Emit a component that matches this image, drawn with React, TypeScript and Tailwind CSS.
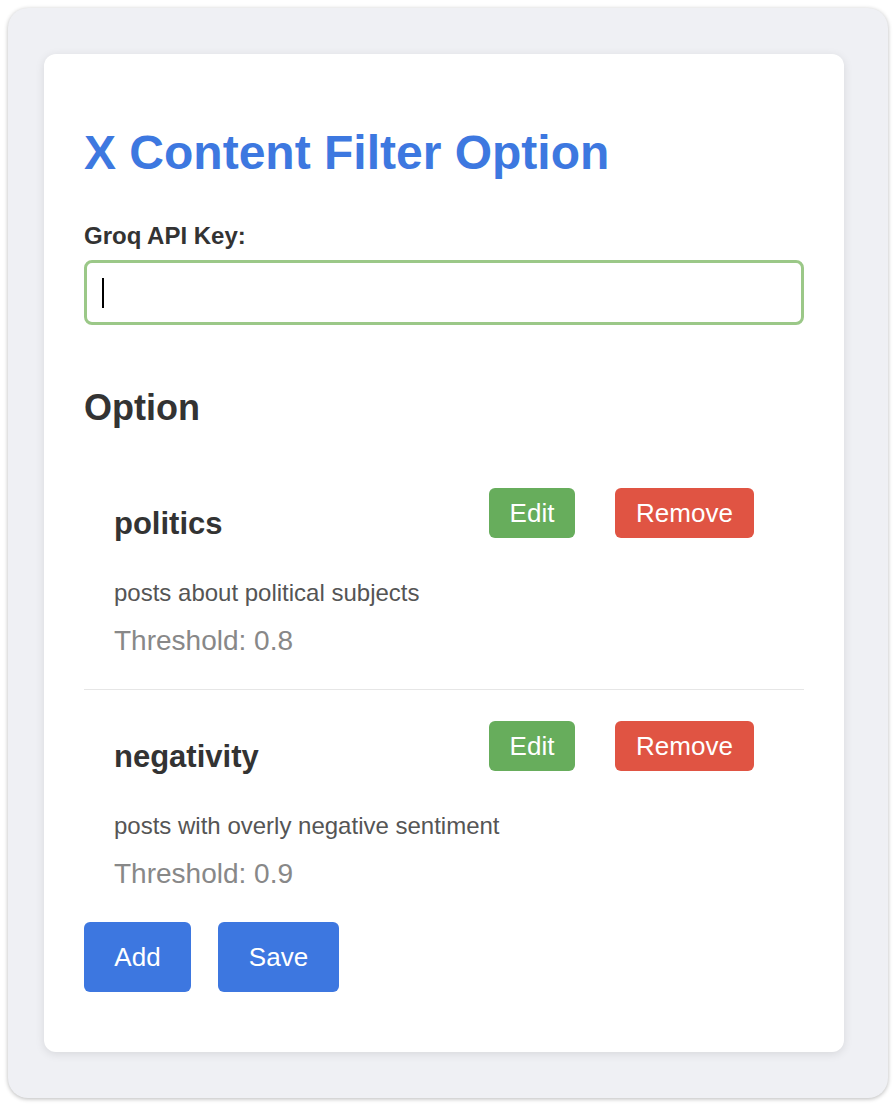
import React from 'react';

type FilterOption = {
  name: string;
  description: string;
  threshold: number;
};

const options: FilterOption[] = [
  { name: 'politics', description: 'posts about political subjects', threshold: 0.8 },
  { name: 'negativity', description: 'posts with overly negative sentiment', threshold: 0.9 },
];

const OptionItem: React.FC<{ option: FilterOption; last: boolean }> = ({ option, last }) => (
  <div className={`px-[30px] pt-[31px] pb-[32px] ${last ? '' : 'border-b border-[#e6e6e6]'}`}>
    <div className="flex items-start justify-between">
      <h3 className="mt-[18px] text-[31px] font-bold leading-[36px] text-[#333333]">{option.name}</h3>
      <div className="mr-[20px] flex gap-[40px]">
        <button
          type="button"
          className="flex h-[50px] w-[86px] items-center justify-center rounded-[6px] bg-[#67ad5c] text-[26px] leading-[30px] text-white"
        >
          Edit
        </button>
        <button
          type="button"
          className="flex h-[50px] w-[139px] items-center justify-center rounded-[6px] bg-[#e05443] text-[26px] leading-[30px] text-white"
        >
          Remove
        </button>
      </div>
    </div>
    <p className="mt-[37px] text-[24px] leading-[28px] text-[#555555]">{option.description}</p>
    <p className="mt-[18px] text-[28px] leading-[32px] text-[#888888]">Threshold: {option.threshold}</p>
  </div>
);

export default function App() {
  return (
    <div className="min-h-[1106px] bg-white p-2 font-['Liberation_Sans',Arial,sans-serif]">
      <div className="h-[1090px] w-[880px] rounded-[20px] bg-[#eff0f4] pt-[46px] pl-[36px] shadow-[0_1px_4px_rgba(0,0,0,0.28)]">
        <div className="w-[800px] rounded-xl bg-white px-[40px] pt-[71px] pb-[60px] shadow-[0_2px_10px_rgba(0,0,0,0.1)]">
          <h1 className="text-[48px] font-bold leading-[56px] text-[#3d78e0]">X Content Filter Option</h1>

          <label className="mt-[41px] block text-[24px] font-bold leading-[28px] text-[#333333]">Groq API Key:</label>
          <div className="mt-[10px] flex h-[65px] items-center rounded-lg border-[3px] border-[#9bc888] pl-[15px]">
            <span className="h-[30px] w-[2px] bg-black" />
          </div>

          <h2 className="mt-[62px] text-[36px] font-bold leading-[42px] text-[#333333]">Option</h2>

          <div className="mt-[28px]">
            {options.map((option, i) => (
              <OptionItem key={option.name} option={option} last={i === options.length - 1} />
            ))}
          </div>

          <div className="flex gap-[27px]">
            <button
              type="button"
              className="flex h-[70px] w-[107px] items-center justify-center rounded-[6px] bg-[#3d77e0] text-[26px] text-white"
            >
              Add
            </button>
            <button
              type="button"
              className="flex h-[70px] w-[121px] items-center justify-center rounded-[6px] bg-[#3d77e0] text-[26px] text-white"
            >
              Save
            </button>
          </div>
        </div>
      </div>
    </div>
  );
}
